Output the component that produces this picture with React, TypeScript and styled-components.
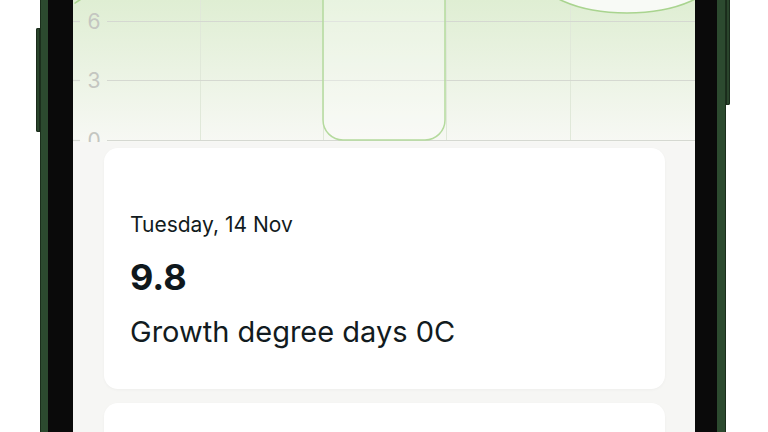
import styled, { createGlobalStyle } from 'styled-components';

const GlobalStyle = createGlobalStyle`
  html, body {
    margin: 0;
    padding: 0;
    background: #ffffff;
  }
  body {
    font-family: Inter, "Noto Sans", "Liberation Sans", sans-serif;
    color: #161f24;
  }
`;

const Page = styled.div`
  width: 768px;
  height: 432px;
  overflow: hidden;
  background: #ffffff;
`;

const Phone = styled.div`
  position: relative;
  display: flex;
  width: 686px;
  height: 432px;
  margin-left: 40px;
  padding: 0 9px 0 8px;
  box-sizing: border-box;
  background: #2c4a2f;
  box-shadow: inset 1px 0 0 #1b2e1c, inset -1px 0 0 #1b2e1c;
`;

const SideButton = styled.div<{ $side: 'left' | 'right'; $top: number; $height: number }>`
  position: absolute;
  ${(p) => (p.$side === 'left' ? 'left: -4px;' : 'right: -4px;')}
  top: ${(p) => p.$top}px;
  width: 4px;
  height: ${(p) => p.$height}px;
  background: #2a452c;
  border-radius: ${(p) => (p.$side === 'left' ? '2px 0 0 2px' : '0 2px 2px 0')};
  box-shadow: inset 0 0 0 1px #1a2b1b;
`;

const Bezel = styled.div`
  flex: 1;
  display: flex;
  padding: 0 22px 0 25px;
  background: #0a0a0a;
`;

const Screen = styled.div`
  flex: 1;
  display: flex;
  flex-direction: column;
  overflow: hidden;
  background: #f6f6f4;
`;

const Chart = styled.svg`
  display: block;
  flex-shrink: 0;
`;

const CardList = styled.div`
  display: flex;
  flex-direction: column;
  gap: 14px;
  padding: 6px 30px 0 31px;
`;

const Card = styled.div<{ $empty?: boolean }>`
  display: flex;
  flex-direction: column;
  padding: ${(p) => (p.$empty ? '0' : '64px 26px 40px')};
  min-height: ${(p) => (p.$empty ? '120px' : '0')};
  background: #ffffff;
  border-radius: 14px;
  box-shadow: 0 1px 3px rgba(0, 0, 0, 0.035);
`;

const DateLabel = styled.div`
  font-size: 21px;
  line-height: 25px;
  font-weight: 400;
  color: #121b20;
`;

const Value = styled.div`
  margin-top: 18px;
  font-size: 36px;
  line-height: 44px;
  font-weight: 700;
  color: #0f181d;
`;

const Metric = styled.div`
  margin-top: 15px;
  font-size: 29px;
  line-height: 35px;
  font-weight: 400;
  color: #121b20;
`;

const gridRows = [
  { y: 21, label: '6' },
  { y: 80, label: '3' },
  { y: 140, label: '0' },
];

const gridCols = [127, 250, 373, 497];

function GrowthChart() {
  return (
    <Chart width="622" height="142" viewBox="0 0 622 142">
      <defs>
        <linearGradient id="chartBg" x1="0" y1="0" x2="0" y2="1">
          <stop offset="0" stopColor="#dfeed3" />
          <stop offset="1" stopColor="#f7f8f4" />
        </linearGradient>
      </defs>
      <rect x="0" y="0" width="622" height="142" fill="url(#chartBg)" />
      {gridCols.map((x) => (
        <line key={x} x1={x + 0.5} y1="0" x2={x + 0.5} y2="140" stroke="#e0e8d9" strokeWidth="1" />
      ))}
      {gridRows.map((r) => (
        <g key={r.label}>
          <line x1="0" y1={r.y + 0.5} x2="7" y2={r.y + 0.5} stroke="#d5d8d1" strokeWidth="1.2" />
          <line x1="34" y1={r.y + 0.5} x2="622" y2={r.y + 0.5} stroke="#d5d8d1" strokeWidth="1.2" />
          <text
            x="21"
            y={r.y + 8}
            textAnchor="middle"
            fontFamily="Inter, sans-serif"
            fontSize="21"
            fill="#c4c6c1"
          >
            {r.label}
          </text>
        </g>
      ))}
      <rect
        x="250"
        y="-30"
        width="122"
        height="170"
        rx="20"
        fill="rgba(255,255,255,0.3)"
        stroke="#b4da9d"
        strokeWidth="1.5"
      />
      <ellipse cx="554" cy="-27" rx="90" ry="40" fill="#f8faf6" stroke="#a9d48f" strokeWidth="1.5" />
      <path d="M1.5 3.5 Q4 1.5 7.5 -0.5" fill="none" stroke="#a9d48f" strokeWidth="1.5" />
    </Chart>
  );
}

export default function App() {
  return (
    <Page>
      <GlobalStyle />
      <Phone>
        <SideButton $side="left" $top={28} $height={104} />
        <SideButton $side="right" $top={-10} $height={115} />
        <Bezel>
          <Screen>
            <GrowthChart />
            <CardList>
              <Card>
                <DateLabel>Tuesday, 14 Nov</DateLabel>
                <Value>9.8</Value>
                <Metric>Growth degree days 0C</Metric>
              </Card>
              <Card $empty />
            </CardList>
          </Screen>
        </Bezel>
      </Phone>
    </Page>
  );
}
